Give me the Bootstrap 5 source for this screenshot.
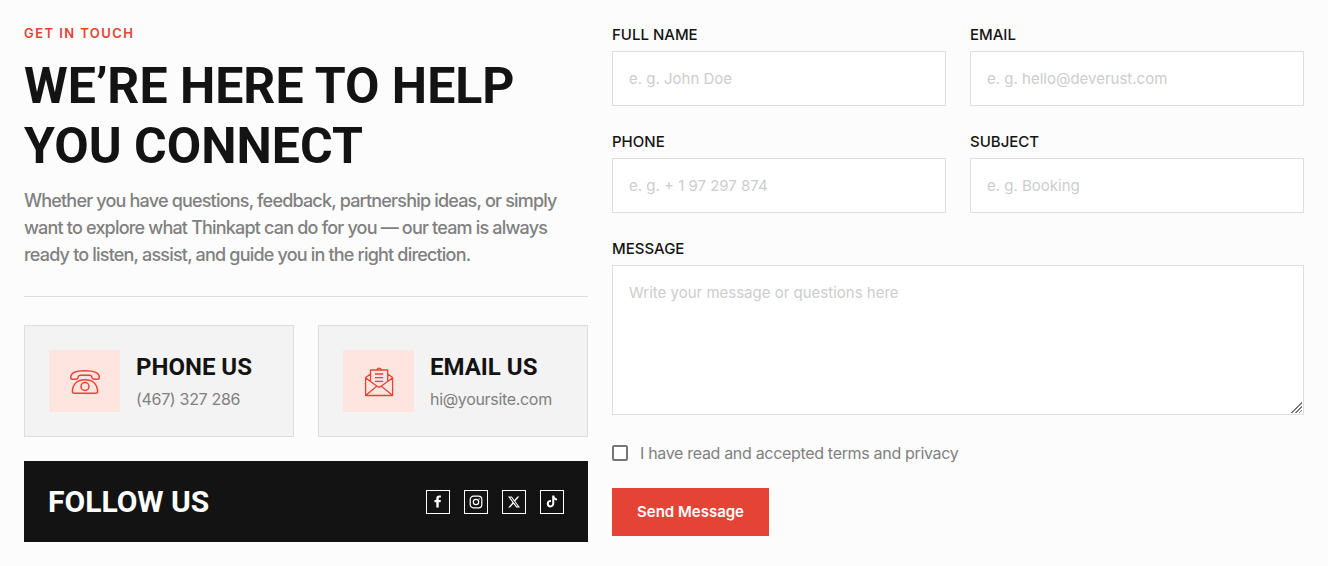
<!DOCTYPE html>
<html lang="en">
<head>
<meta charset="utf-8">
<meta name="viewport" content="width=device-width, initial-scale=1">
<title>Get in touch</title>
<link rel="stylesheet" href="https://cdn.jsdelivr.net/npm/bootstrap@5.3.0/dist/css/bootstrap.min.css">
<style>
:root { --accent: #e54335; --ink: #131313; --muted: #808080; --line: #dedede; }
body { font-family: Inter, "Liberation Sans", sans-serif; font-size: 16px; letter-spacing: -0.02em; color: var(--muted); background: #fcfcfc; }
h1, h2, h3 { font-family: Roboto, "Liberation Sans", sans-serif; font-weight: 700; letter-spacing: normal; color: var(--ink); text-transform: uppercase; margin: 0; }
h1 { font-size: 50px; line-height: 60px; }
h2 { font-size: 30px; line-height: 33px; color: #fff; }
h3 { font-size: 24px; line-height: 32px; }
.eyebrow { font-size: 13px; line-height: 18px; font-weight: 600; letter-spacing: 0.11em; color: var(--accent); text-transform: uppercase; margin-bottom: 14px; }
.intro { font-size: 18px; line-height: 27px; font-weight: 500; letter-spacing: -0.045em; margin: 11px 0 0; }
.rule { border-top: 1px solid var(--line); opacity: 1; margin: 28px 0; }
.contact-tile { background: #f3f3f3; border: 1px solid var(--line); padding: 24px; }
.contact-tile a { color: var(--muted); line-height: 24px; }
.tile-icon { background: #ffe5e0; color: var(--accent); padding: 15px 20px; }
.follow { background: var(--ink); }
.social-links { gap: 14px; }
.social { width: 24px; height: 24px; border: 1px solid #fff; color: #fff; }
.form-label { font-size: 15px; line-height: 22px; font-weight: 500; letter-spacing: normal; color: var(--ink); text-transform: uppercase; margin-bottom: 5px; }
.field { margin-bottom: 25px; }
.form-control, .form-control:focus { font-size: 15px; line-height: 23px; letter-spacing: normal; padding: 15px 16px; border: 1px solid var(--line); border-radius: 0; background: #fff; }
.form-control::placeholder { color: #cdcdcd; }
textarea.form-control { height: 150px; }
textarea::-webkit-resizer { background: linear-gradient(135deg, transparent 50%, #777 50%, #777 57%, transparent 57%, transparent 66%, #777 66%, #777 73%, transparent 73%, transparent 82%, #777 82%, #777 89%, transparent 89%) right 1px bottom 1px / 11px 11px no-repeat; }
.terms-row { gap: 12px; margin: 26px 0 23px; }
.form-check-input.terms { width: 16px; height: 16px; border: 2px solid #767676; border-radius: 2px; margin: 0; float: none; background-color: #fff; }
.btn-send { background: var(--accent); color: #fff; font-size: 15px; line-height: 24px; font-weight: 600; letter-spacing: normal; padding: 11px 24px; border-radius: 0; }
.btn-send:hover { background: #c9382c; color: #fff; }
@media (min-width: 992px) {
  .info-col { flex: 0 0 calc(45% - 12px); }
}
</style>
</head>
<body>
<main class="container-fluid p-4 d-flex flex-column flex-lg-row gap-4">
  <section class="info-col">
    <p class="eyebrow">Get in touch</p>
    <h1>We’re here to help you connect</h1>
    <p class="intro">Whether you have questions, feedback, partnership ideas, or simply want to explore what Thinkapt can do for you — our team is always ready to listen, assist, and guide you in the right direction.</p>
    <hr class="rule">
    <div class="row g-4">
      <div class="col-sm-6">
        <div class="contact-tile d-flex align-items-center gap-3">
          <div class="tile-icon d-flex">
            <svg width="31" height="32" viewBox="0 0 31 32" fill="none" stroke="currentColor" stroke-width="1.5" stroke-linejoin="round" aria-hidden="true">
              <path d="M1.700 12.300C1.700 7.800 8 5.700 16 5.700s14.300 2.100 14.300 6.600c0 1.300-.8 2-1.800 2h-3.200c-1.200 0-2-.5-2.300-1.500l-.3-1.200c-.3-.9-1-1.400-2-1.400h-9.400c-1 0-1.700.5-2 1.400L9 12.800c-.3 1-1.100 1.500-2.300 1.500H3.500c-1 0-1.800-.7-1.800-2Z"/>
              <path d="M5.300 28.300h21.400c1.300 0 2-.7 1.900-2C28.200 19 23.500 14.700 16 14.700S3.800 19 3.400 26.300c-.1 1.300.6 2 1.900 2Z"/>
              <circle cx="16" cy="21.500" r="4"/>
            </svg>
          </div>
          <div>
            <h3>Phone us</h3>
            <a class="text-decoration-none d-block mt-1" href="tel:467327286">(467) 327 286</a>
          </div>
        </div>
      </div>
      <div class="col-sm-6">
        <div class="contact-tile d-flex align-items-center gap-3">
          <div class="tile-icon d-flex">
            <svg width="31" height="32" viewBox="0 0 31 32" fill="none" stroke="currentColor" stroke-width="1.300" stroke-linejoin="round" aria-hidden="true">
              <path d="M7.500 9 2.600 12.500v18h27v-18L24.700 9M2.600 12.700l4.900 3.700M29.600 12.700l-4.900 3.700M7.500 16.400V5h17.200v11.400M13.600 5c.6-1.200 1.500-1.800 2.500-1.800s1.900.6 2.500 1.800M7.500 16.400l7 5.200c1 .8 2.200.8 3.200 0l7-5.200M2.800 30.300l11-9M29.400 30.300l-11-9"/>
              <path d="M12 9h8.200M12 12.700h8.200M12 16.400h8.200"/>
            </svg>
          </div>
          <div>
            <h3>Email us</h3>
            <a class="text-decoration-none d-block mt-1" href="mailto:hi@yoursite.com">hi@yoursite.com</a>
          </div>
        </div>
      </div>
    </div>
    <div class="follow d-flex align-items-center justify-content-between p-4 mt-4">
      <h2>Follow us</h2>
      <div class="d-flex social-links">
        <a class="social d-flex align-items-center justify-content-center" href="#" aria-label="Facebook"><svg width="8" height="13" viewBox="0 0 8 13" fill="currentColor" aria-hidden="true"><path d="M2.300 12.500V7.300H.5V5h1.800V3.500C2.300 1.500 3.300.5 5.300.5h1.600v2.100H5.700c-.7 0-1 .3-1 1V5h2.200l-.4 2.300H4.700v5.200Z"/></svg></a>
        <a class="social d-flex align-items-center justify-content-center" href="#" aria-label="Instagram"><svg width="14" height="14" viewBox="0 0 14 14" fill="none" stroke="currentColor" stroke-width="1.200" aria-hidden="true"><rect x="1.200" y="1.200" width="11.600" height="11.600" rx="3.300"/><circle cx="7" cy="7" r="2.700"/><circle cx="10.200" cy="3.800" r=".6" fill="currentColor" stroke="none"/></svg></a>
        <a class="social d-flex align-items-center justify-content-center" href="#" aria-label="X"><svg width="12" height="12" viewBox="0 0 16 16" fill="currentColor" aria-hidden="true"><path d="M12.600.75h2.454l-5.360 6.142L16 15.250h-4.937l-3.867-5.070-4.425 5.070H.316l5.733-6.570L0 .75h5.063l3.495 4.633L12.601.75Zm-.86 13.028h1.360L4.323 2.145H2.865z"/></svg></a>
        <a class="social d-flex align-items-center justify-content-center" href="#" aria-label="TikTok"><svg width="12" height="13" viewBox="0 0 16 16" fill="currentColor" aria-hidden="true"><path d="M8.300 0h2.700c.2 2.300 1.500 3.700 3.700 3.900v2.700c-1.400 0-2.600-.4-3.700-1.200v5.400c0 3-2.200 5.200-5 5.200s-5-2.200-5-5c0-3 2.300-5.200 5.600-5v2.800c-1.700-.3-2.800.7-2.800 2.200 0 1.300.9 2.300 2.200 2.300 1.400 0 2.300-.9 2.300-2.600Z"/></svg></a>
      </div>
    </div>
  </section>

  <form class="flex-fill">
    <div class="row gx-4">
      <div class="col-md-6 field">
        <label class="form-label d-block" for="name">Full name</label>
        <input class="form-control" id="name" type="text" placeholder="e. g. John Doe">
      </div>
      <div class="col-md-6 field">
        <label class="form-label d-block" for="email">Email</label>
        <input class="form-control" id="email" type="email" placeholder="e. g. hello@deverust.com">
      </div>
      <div class="col-md-6 field">
        <label class="form-label d-block" for="phone">Phone</label>
        <input class="form-control" id="phone" type="tel" placeholder="e. g. + 1 97 297 874">
      </div>
      <div class="col-md-6 field">
        <label class="form-label d-block" for="subject">Subject</label>
        <input class="form-control" id="subject" type="text" placeholder="e. g. Booking">
      </div>
      <div class="col-12">
        <label class="form-label d-block" for="message">Message</label>
        <textarea class="form-control" id="message" placeholder="Write your message or questions here"></textarea>
      </div>
    </div>
    <div class="terms-row d-flex align-items-center">
      <input class="form-check-input terms" id="terms" type="checkbox">
      <label for="terms">I have read and accepted terms and privacy</label>
    </div>
    <button class="btn btn-send" type="submit">Send Message</button>
  </form>
</main>
<script src="https://cdn.jsdelivr.net/npm/bootstrap@5.3.0/dist/js/bootstrap.bundle.min.js"></script>
</body>
</html>
